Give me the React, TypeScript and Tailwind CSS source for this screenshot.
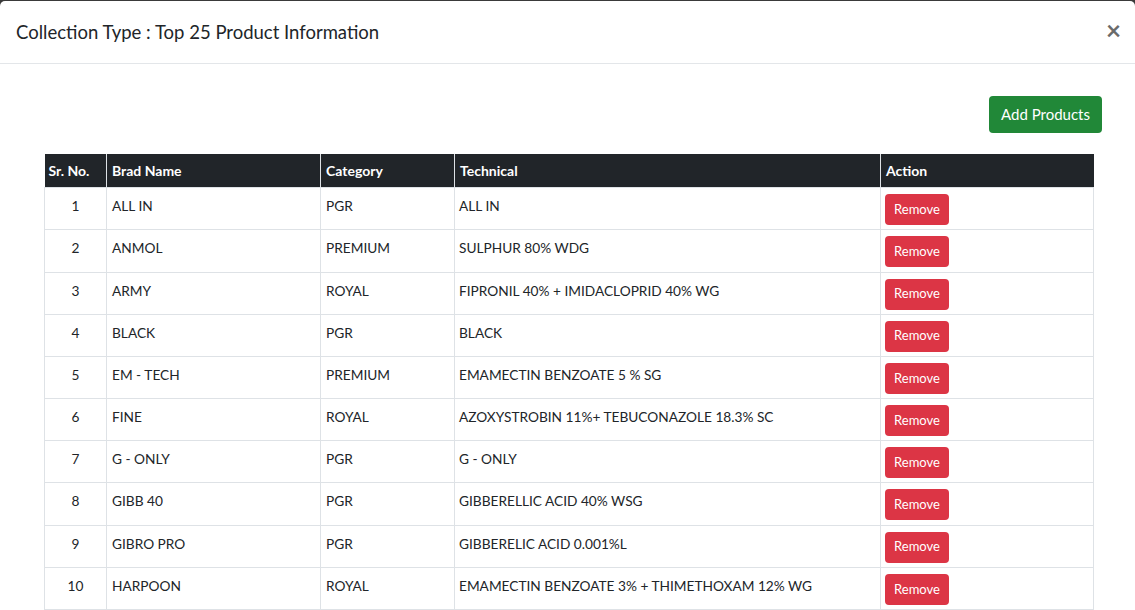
import React from "react";

const rows: [string, string, string, string][] = [
  ["1", "ALL IN", "PGR", "ALL IN"],
  ["2", "ANMOL", "PREMIUM", "SULPHUR 80% WDG"],
  ["3", "ARMY", "ROYAL", "FIPRONIL 40% + IMIDACLOPRID 40% WG"],
  ["4", "BLACK", "PGR", "BLACK"],
  ["5", "EM - TECH", "PREMIUM", "EMAMECTIN BENZOATE 5 % SG"],
  ["6", "FINE", "ROYAL", "AZOXYSTROBIN 11%+ TEBUCONAZOLE 18.3% SC"],
  ["7", "G - ONLY", "PGR", "G - ONLY"],
  ["8", "GIBB 40", "PGR", "GIBBERELLIC ACID 40% WSG"],
  ["9", "GIBRO PRO", "PGR", "GIBBERELIC ACID 0.001%L"],
  ["10", "HARPOON", "ROYAL", "EMAMECTIN BENZOATE 3% + THIMETHOXAM 12% WG"],
];

export default function App() {
  return (
    <div
      className="w-[1135px] h-[610px] overflow-hidden bg-[#3a3a3a] pt-px"
      style={{ fontFamily: "Lato, 'Open Sans', sans-serif" }}
    >
      <div className="bg-white h-full rounded-t-[5px] flex flex-col text-[#212529]">
        <div className="h-[63px] border-b border-[#e3e6e9] flex items-center justify-between pl-4 pr-[14px]">
          <h5 className="text-[18.5px] leading-[30px] text-[#212529] font-normal">
            Collection Type : Top 25 Product Information
          </h5>
          <button className="text-[26px] leading-none font-bold text-[#6b6b6b] -mt-1">×</button>
        </div>
        <div className="pt-[32px] flex flex-col">
          <div className="flex justify-end pr-[33px]">
            <button className="h-[37px] w-[113px] rounded-[4px] bg-[#218838] text-white text-[15px]">
              Add Products
            </button>
          </div>
          <table className="ml-[44px] mt-[21px] w-[1049px] border-collapse text-[13.7px] table-fixed">
            <colgroup>
              <col className="w-[62px]" />
              <col className="w-[214px]" />
              <col className="w-[134px]" />
              <col className="w-[426px]" />
              <col className="w-[213px]" />
            </colgroup>
            <thead>
              <tr className="h-[34px] bg-[#212529] text-white font-bold text-left text-[14px]">
                <th className="px-1 border-r border-[#dee2e6] font-bold">Sr. No.</th>
                <th className="px-[5px] border-r border-[#dee2e6] font-bold">Brad Name</th>
                <th className="px-[5px] border-r border-[#dee2e6] font-bold">Category</th>
                <th className="px-[5px] border-r border-[#dee2e6] font-bold">Technical</th>
                <th className="px-[5px] font-bold">Action</th>
              </tr>
            </thead>
            <tbody>
              {rows.map((r) => (
                <tr key={r[0]} className="h-[42.2px]">
                  <td className="border border-[#dee2e6] text-center align-top pt-[8px] px-1">{r[0]}</td>
                  <td className="border border-[#dee2e6] align-top pt-[8px] px-[5px]">{r[1]}</td>
                  <td className="border border-[#dee2e6] align-top pt-[8px] px-[5px]">{r[2]}</td>
                  <td className="border border-[#dee2e6] align-top pt-[8px] px-[4px]">{r[3]}</td>
                  <td className="border border-[#dee2e6] align-top pt-[6px] px-[4px]">
                    <button className="h-[31px] w-[64px] rounded-[4px] bg-[#dc3545] text-white text-[13px]">
                      Remove
                    </button>
                  </td>
                </tr>
              ))}
            </tbody>
          </table>
        </div>
      </div>
    </div>
  );
}
